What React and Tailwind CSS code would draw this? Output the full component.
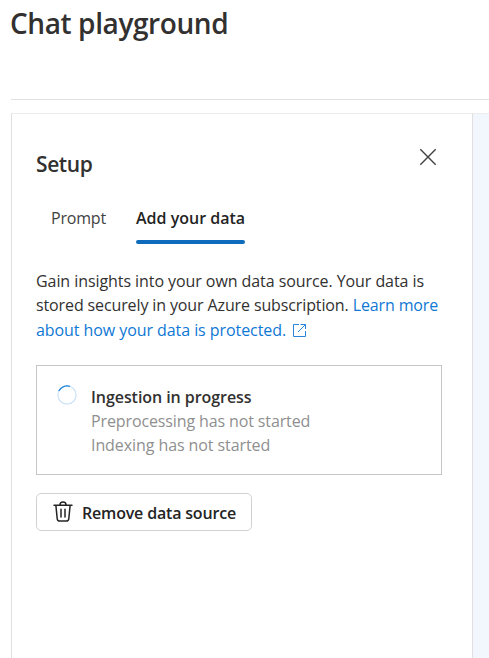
const CloseIcon = () => (
  <svg width="18" height="18" viewBox="0 0 18 18" fill="none" stroke="#424242" strokeWidth="1.4">
    <path d="M1.3 1.3 16.7 16.7M16.7 1.3 1.3 16.7" />
  </svg>
);

const ExternalIcon = () => (
  <svg width="13" height="13" viewBox="0 0 13 13" fill="none" stroke="#2b86d9" className="ml-[7px] inline-block align-[-1px]">
    <path d="M6 .5H.5v12h12V7M7.5 .5h5V5M12.5 .5 5 8" />
  </svg>
);

const TrashIcon = () => (
  <svg width="20" height="22" viewBox="0 0 20 22" fill="none" stroke="#242424" strokeWidth="1.5" strokeLinecap="round" strokeLinejoin="round">
    <path d="M1 4.3h18M6.9 4.2a3.1 3.1 0 0 1 6.2 0M2.9 4.5l1.3 13.2a2.6 2.6 0 0 0 2.6 2.4h6.4a2.6 2.6 0 0 0 2.6-2.4l1.3-13.2M8 8.3v7.6M12 8.3v7.6" />
  </svg>
);

const Spinner = () => (
  <svg width="20" height="20" viewBox="0 0 20 20" fill="none">
    <circle cx="10" cy="10" r="9.1" stroke="#cfe4f8" strokeWidth="1.3" />
    <path d="M1.8 6A9.1 9.1 0 0 1 13 1.4" stroke="#2488d8" strokeWidth="1.4" />
  </svg>
);

const App = () => {
  return (
    <div className="flex h-[658px] w-[489px] flex-col overflow-hidden bg-white pl-[11px] font-['Open_Sans','Noto_Sans',sans-serif] text-base whitespace-nowrap text-[#323130]">
      <header className="h-[100px] shrink-0 border-b border-[#e0e0e0]">
        <h1 className="-ml-px pt-[3px] text-[28px] leading-10 font-semibold tracking-[-0.4px]">Chat playground</h1>
      </header>

      <main className="mt-[13px] flex flex-1">
        <section className="w-[462px] border border-b-0 border-[#e0e0e0] border-t-[#ededed] pl-6">
          <div className="flex h-[87px] items-start justify-between pr-[35px]">
            <h2 className="pt-[34px] text-[21px] leading-8 font-semibold tracking-[-0.4px]">Setup</h2>
            <button aria-label="Close" className="pt-[34px]">
              <CloseIcon />
            </button>
          </div>

          {/* Tabs */}
          <div className="flex h-[43px] gap-[30px] pl-[15px] leading-[34px]">
            <button className="flex w-[55px] text-[#424242]">
              <span className="tracking-[-0.2px]">Prompt</span>
            </button>
            <button className="flex h-[43px] w-[109px] flex-col justify-between text-left text-[#242424]">
              <span className="font-semibold">Add your data</span>
              <span className="h-1 w-full rounded-full bg-[#0f6cbd]" />
            </button>
          </div>

          <p className="mt-[25px] leading-6">
            <span className="tracking-[-0.07px]">Gain insights into your own data source. Your data is</span>
            <br />
            <span className="tracking-[-0.12px]">
              stored securely in your Azure subscription. <a className="text-[#0f78d4]">Learn more</a>
            </span>
            <br />
            <a className="inline-block pt-px text-[#0f78d4]">
              <span className="tracking-[-0.07px]">about how your data is protected.</span>
              <ExternalIcon />
            </a>
          </p>

          {/* Ingestion status */}
          <div className="mt-[23px] flex h-[110px] w-[406px] gap-[14px] border border-[#c8c6c4] pt-[19px] pl-5">
            <Spinner />
            <div className="leading-6 text-[#8f8f8f]">
              <div className="font-semibold tracking-[-0.06px] text-[#323130]">Ingestion in progress</div>
              <div className="tracking-[-0.12px]">Preprocessing has not started</div>
              <div className="tracking-[-0.08px]">Indexing has not started</div>
            </div>
          </div>

          <button className="mt-[18px] flex h-[38px] w-[216px] items-center gap-[9px] rounded-[5px] border border-[#d1d1d1] pl-4 font-semibold text-[#242424]">
            <TrashIcon />
            <span className="pt-0.5 tracking-[-0.18px]">Remove data source</span>
          </button>
        </section>
        <aside className="flex-1 border-t border-[#ededed] bg-[#f2f7fe]" />
      </main>
    </div>
  );
};

export default App;
